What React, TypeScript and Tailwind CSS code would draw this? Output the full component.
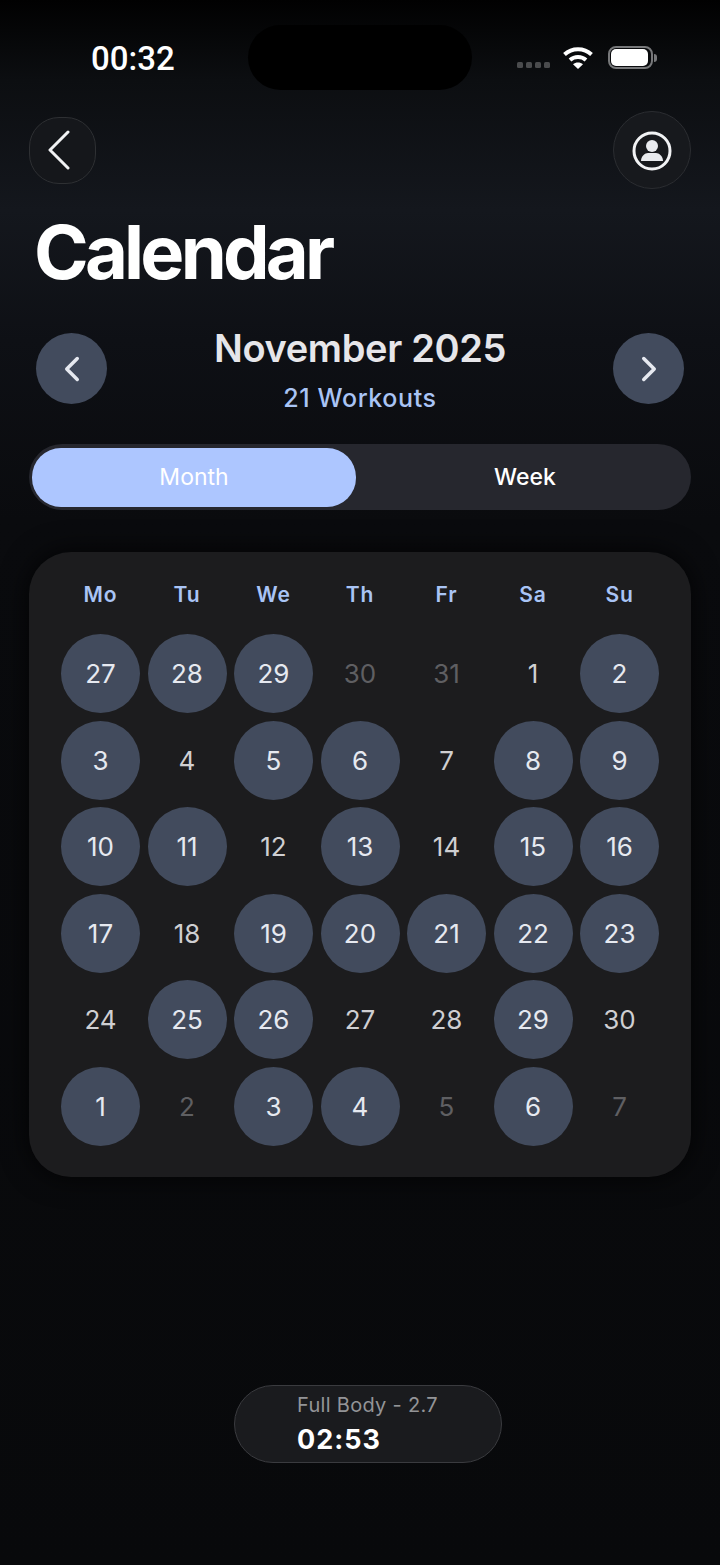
import { ChevronLeft, ChevronRight } from 'lucide-react'

const weekdays = ['Mo', 'Tu', 'We', 'Th', 'Fr', 'Sa', 'Su']

// d = day, w = had a workout, o = outside of the month
const days = [
  { d: 27, w: 1 }, { d: 28, w: 1 }, { d: 29, w: 1 }, { d: 30, o: 1 }, { d: 31, o: 1 }, { d: 1 }, { d: 2, w: 1 },
  { d: 3, w: 1 }, { d: 4 }, { d: 5, w: 1 }, { d: 6, w: 1 }, { d: 7 }, { d: 8, w: 1 }, { d: 9, w: 1 },
  { d: 10, w: 1 }, { d: 11, w: 1 }, { d: 12 }, { d: 13, w: 1 }, { d: 14 }, { d: 15, w: 1 }, { d: 16, w: 1 },
  { d: 17, w: 1 }, { d: 18 }, { d: 19, w: 1 }, { d: 20, w: 1 }, { d: 21, w: 1 }, { d: 22, w: 1 }, { d: 23, w: 1 },
  { d: 24 }, { d: 25, w: 1 }, { d: 26, w: 1 }, { d: 27 }, { d: 28 }, { d: 29, w: 1 }, { d: 30 },
  { d: 1, w: 1 }, { d: 2, o: 1 }, { d: 3, w: 1 }, { d: 4, w: 1 }, { d: 5, o: 1 }, { d: 6, w: 1 }, { d: 7, o: 1 },
]

function StatusBar() {
  return (
    <div className="flex h-[90px] items-center pt-[25px]">
      <div className="mb-[-1px] w-[248px] pl-[91px] font-['Roboto',sans-serif] text-[33px] font-medium leading-none text-white">00:32</div>
      <div className="h-[65px] w-[224px] rounded-[33px] bg-black" />
      <div className="flex items-center pl-[45px]">
        <div className="mt-[14px] flex gap-[3px]">
          <i className="h-[6px] w-[6px] rounded-[1.5px] bg-[#4a4b4d]" />
          <i className="h-[6px] w-[6px] rounded-[1.5px] bg-[#4a4b4d]" />
          <i className="h-[6px] w-[6px] rounded-[1.5px] bg-[#4a4b4d]" />
          <i className="h-[6px] w-[6px] rounded-[1.5px] bg-[#4a4b4d]" />
        </div>
        <svg className="ml-[13px]" width="30" height="24" viewBox="0 0 30 24" fill="none" stroke="#fff" strokeWidth="4">
          <path d="M1.500 8.500C9 1.500 21 1.500 28.500 8.500" />
          <path d="M7 14c4.500-4 11.500-4 16 0" />
          <path d="M15 23l-5-4.800c2.800-2.400 7.200-2.400 10 0z" fill="#fff" stroke="none" />
        </svg>
        <div className="ml-[15px] flex items-center">
          <div className="flex h-[23px] w-[45px] items-center rounded-[8px] border-2 border-[#77787a] px-[1px]">
            <div className="h-[17px] w-[37px] rounded-[5px] bg-white" />
          </div>
          <div className="ml-[1px] h-[8px] w-[3px] rounded-r-full bg-[#77787a]" />
        </div>
      </div>
    </div>
  )
}

function MonthButton({ children }: { children: React.ReactNode }) {
  return (
    <button className="flex h-[71px] w-[71px] items-center justify-center rounded-full bg-[#424b5d] text-[#e6e9f0]">
      {children}
    </button>
  )
}

export default function App() {
  return (
    <div className="h-[1565px] w-[720px] overflow-hidden bg-[linear-gradient(180deg,#010101_0px,#0c0e11_80px,#14171d_210px,#0e1015_340px,#0a0b0e_520px,#08090b_1565px)] font-['Inter',sans-serif]">
      <StatusBar />

      {/* top buttons */}
      <div className="flex items-center justify-between px-[29px] pt-[21px]">
        <button className="flex h-[67px] w-[67px] items-center justify-center rounded-[30px] border border-[#2e3033] bg-[#15171b] text-[#f1f2f4]">
          <svg className="ml-[-7px]" width="26" height="40" viewBox="0 0 26 40" fill="none" stroke="currentColor" strokeWidth="3" strokeLinecap="round" strokeLinejoin="round">
            <path d="M22 2L4 20l18 18" />
          </svg>
        </button>
        <button className="flex h-[78px] w-[78px] items-center justify-center rounded-full border border-[#2b2d31] bg-[#17191d]">
          <svg className="mt-[2px]" width="40" height="40" viewBox="0 0 40 40" fill="none">
            <circle cx="20" cy="20" r="18" stroke="#f1f2f4" strokeWidth="3" />
            <circle cx="20" cy="15" r="6" fill="#e8eaee" />
            <path d="M9 30c0-5 4-8 7-8h8c3 0 7 3 7 8z" fill="#e8eaee" />
          </svg>
        </button>
      </div>

      <h1 className="mt-[27px] pl-[34px] text-[74px] font-bold leading-[72px] tracking-[-3.8px] text-white">Calendar</h1>

      {/* month switcher */}
      <div className="mt-[45px] flex items-start justify-between px-[36px]">
        <MonthButton><ChevronLeft size={42} strokeWidth={2} /></MonthButton>
        <div className="flex flex-col items-center">
          <div className="mt-[-7px] text-[38px] font-semibold leading-[44px] tracking-[-0.35px] text-[#e6e6ea]">November 2025</div>
          <div className="mt-[13px] text-[25px] font-medium leading-[30px] tracking-[0.6px] text-[#a9c4f5]">21 Workouts</div>
        </div>
        <MonthButton><ChevronRight size={42} strokeWidth={2} /></MonthButton>
      </div>

      {/* month / week tabs */}
      <div className="mx-[29px] mt-[31px] flex h-[66px] rounded-[33px] bg-[#26272e] p-[3px]">
        <div className="mt-[1px] flex h-[59px] w-[324px] items-center justify-center rounded-[29px] bg-[#adc6ff] text-[23px] leading-none text-white">Month</div>
        <div className="flex flex-1 items-center justify-center pl-[6px] text-[23px] font-medium leading-none text-white">Week</div>
      </div>

      {/* calendar */}
      <div className="mx-[29px] mt-[42px] h-[625px] rounded-[42px] bg-[#1c1c1e] px-[32px] pt-[30px] shadow-[0_0_28px_rgba(0,0,0,0.8)]">
        <div className="grid grid-cols-[repeat(7,79px)] gap-x-[7.5px]">
          {weekdays.map((w) => (
            <div key={w} className="text-center text-[21px] font-semibold leading-[25px] tracking-[0.8px] text-[#a9c4f5]">{w}</div>
          ))}
        </div>
        <div className="mt-[27px] grid grid-cols-[repeat(7,79px)] auto-rows-[79px] gap-[7.5px]">
          {days.map((x, i) => (
            <div
              key={i}
              className={
                x.w
                  ? 'flex items-center justify-center rounded-full bg-[#424b5d] text-[26px] text-[#e6e9f0]'
                  : x.o
                    ? 'flex items-center justify-center rounded-full text-[26px] text-[#5f5f62]'
                    : 'flex items-center justify-center rounded-full text-[26px] text-[#cfcfd2]'
              }
            >
              {x.d}
            </div>
          ))}
        </div>
      </div>

      {/* running workout */}
      <div className="ml-[234px] mt-[208px] flex h-[78px] w-[268px] flex-col rounded-[39px] border border-[#3a3b3f] bg-[#1a1b1e] pl-[62px] pt-[7px]">
        <div className="text-[20px] leading-[24px] tracking-[0.3px] text-[#939497]">Full Body - 2.7</div>
        <div className="mt-[7px] text-[27px] font-bold leading-[32px] tracking-[1px] text-white">02:53</div>
      </div>
    </div>
  )
}
